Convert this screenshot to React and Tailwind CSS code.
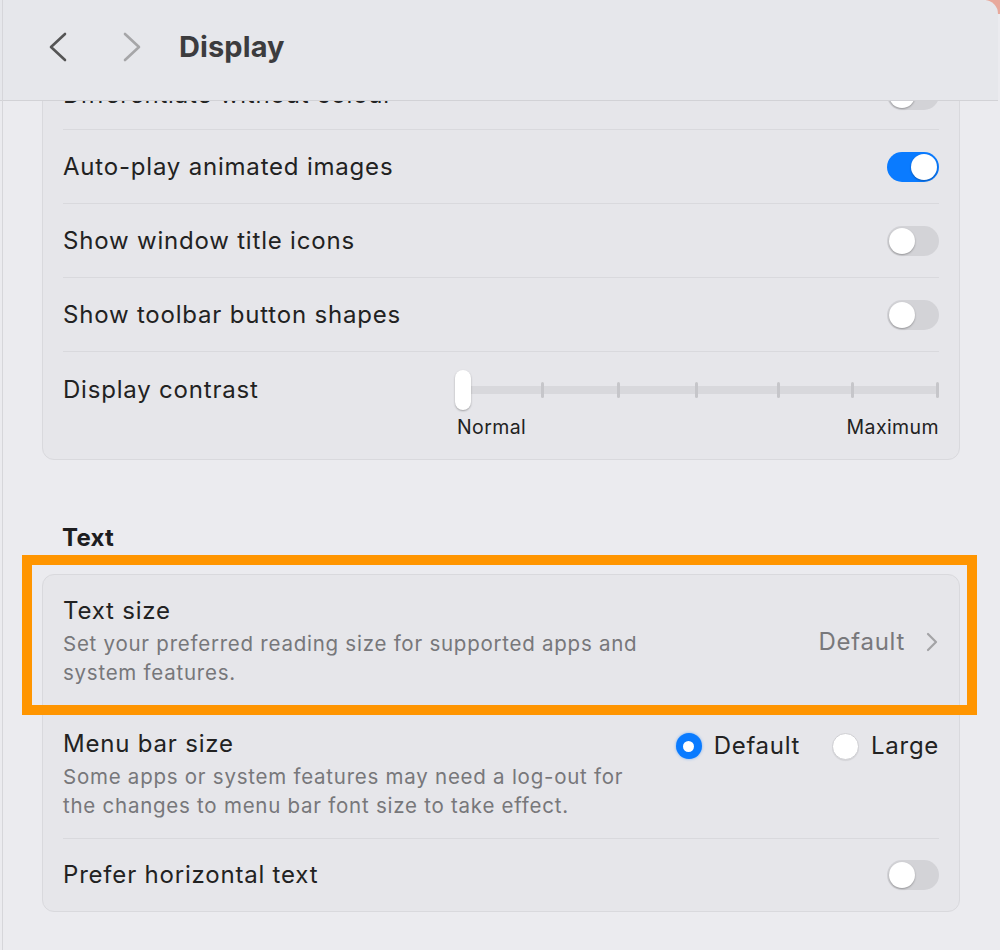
import React from 'react'

const font = { fontFamily: 'Inter, "Noto Sans", sans-serif' }

function Toggle({ on }) {
  return (
    <div
      className={
        'w-[52px] h-[30px] rounded-full p-[2px] flex items-center shrink-0 ' +
        (on ? 'bg-[#0a7bff] justify-end' : 'bg-[#d3d3d7] justify-start')
      }
    >
      <div className="w-[26px] h-[26px] rounded-full bg-white shadow-[0_1px_2px_rgba(0,0,0,0.3)]" />
    </div>
  )
}

function Radio({ on, label }) {
  return (
    <div className="flex items-center gap-[12px]">
      {on ? (
        <div className="w-[26px] h-[26px] rounded-full bg-[#0a7bff] flex items-center justify-center shadow-[0_0_3px_rgba(10,123,255,0.5)]">
          <div className="w-[11px] h-[11px] rounded-full bg-white" />
        </div>
      ) : (
        <div className="w-[27px] h-[27px] rounded-full bg-white border border-[#cfcfd3] shadow-[0_1px_1px_rgba(0,0,0,0.08)]" />
      )}
      <span className="text-[24px] tracking-[0.7px] text-[#222]">{label}</span>
    </div>
  )
}

function ToggleRow({ label, on }) {
  return (
    <div className="h-[74px] flex items-center justify-between border-b border-[#d9d9dd]">
      <span className="text-[24px] tracking-[0.8px] text-[#222]">{label}</span>
      <Toggle on={on} />
    </div>
  )
}

function Slider() {
  const ticks = [543, 619, 697, 779, 853, 938]
  return (
    <div className="w-[484px] flex flex-col">
      <div className="relative h-[40px]">
        <div className="absolute left-[6px] right-0 top-[16px] h-[8px] rounded-full bg-[#d8d8dc]" />
        {ticks.map((t) => (
          <div
            key={t}
            className="absolute top-[12px] w-[3px] h-[16px] rounded-full bg-[#c6c6ca]"
            style={{ left: t - 456 - 1.5 }}
          />
        ))}
        <div className="absolute left-0 top-0 w-[16px] h-[40px] rounded-full bg-white shadow-[0_1px_2px_rgba(0,0,0,0.3)]" />
      </div>
      <div className="flex justify-between text-[19.5px] tracking-[0.4px] text-[#222] mt-[4px] leading-[26px] pl-[2px]">
        <span>Normal</span>
        <span>Maximum</span>
      </div>
    </div>
  )
}

export default function App() {
  return (
    <div className="w-[1000px] h-[950px] relative overflow-hidden bg-[#ebebef]" style={font}>
      {/* desktop peeking through the rounded window corner */}
      <div className="absolute top-0 right-0 w-[14px] h-[14px] bg-[#e8a99c]" />
      <div className="absolute top-0 bottom-0 left-[2px] w-px bg-[#d6d6da] z-20" />

      <header className="absolute top-0 left-0 right-[2px] h-[101px] z-10 bg-[#e6e7eb] border-b border-[#d2d2d6] rounded-tr-[14px] flex items-center pl-[48px] pb-[6px]">
        <svg width="20" height="30" viewBox="0 0 20 30" className="mr-[54px]">
          <path d="M17 2 L3 15 L17 28" fill="none" stroke="#555" strokeWidth="2.6" strokeLinecap="round" strokeLinejoin="round" />
        </svg>
        <svg width="20" height="30" viewBox="0 0 20 30" className="mr-[37px]">
          <path d="M3 2 L17 15 L3 28" fill="none" stroke="#a6a6a8" strokeWidth="2.6" strokeLinecap="round" strokeLinejoin="round" />
        </svg>
        <h1 className="text-[29px] font-bold text-[#3c3c3e] tracking-[0.1px]">Display</h1>
      </header>

      <main className="pt-[45px] pl-[42px] pr-[40px]">
        <section className="rounded-[12px] bg-[#e6e6ea] border border-[#d9d9dd] px-[20px]">
          <div className="h-[84px] pt-[14px] flex items-center justify-between border-b border-[#d9d9dd]">
            <span className="text-[24px] tracking-[0.8px] text-[#222]">Differentiate without colour</span>
            <Toggle on={false} />
          </div>
          <ToggleRow label="Auto-play animated images" on />
          <ToggleRow label="Show window title icons" on={false} />
          <ToggleRow label="Show toolbar button shapes" on={false} />
          <div className="h-[107px] flex justify-between pt-[18px]">
            <span className="text-[24px] tracking-[0.8px] text-[#222] leading-[40px]">Display contrast</span>
            <Slider />
          </div>
        </section>

        <h2 className="mt-[64px] mb-[22px] px-[20px] text-[24px] font-bold tracking-[0.3px] text-[#1d1d1f] leading-[28px]">Text</h2>

        <section className="relative rounded-[12px] bg-[#e6e6ea] border border-[#d9d9dd] px-[20px]">
          <div className="pt-[22px] pb-[20px] flex items-center justify-between border-b border-[#d9d9dd]">
            <div className="flex flex-col">
              <span className="text-[24px] tracking-[0.8px] text-[#222] leading-[28px]">Text size</span>
              <span className="text-[20.5px] tracking-[0.75px] text-[#77777a] leading-[29px] mt-[4px] w-[585px]">
                Set your preferred reading size for supported apps and system features.
              </span>
            </div>
            <div className="flex items-center gap-[21px] pr-[1px]">
              <span className="text-[24px] tracking-[0.7px] text-[#78787b]">Default</span>
              <svg width="12" height="20" viewBox="0 0 12 20">
                <path d="M2 2 L10 10 L2 18" fill="none" stroke="#a3a3a6" strokeWidth="2.2" strokeLinecap="round" strokeLinejoin="round" />
              </svg>
            </div>
          </div>

          <div className="pt-[22px] pb-[18px] flex justify-between border-b border-[#d9d9dd]">
            <div className="flex flex-col">
              <span className="text-[24px] tracking-[0.8px] text-[#222] leading-[28px]">Menu bar size</span>
              <span className="text-[20.5px] tracking-[0.75px] text-[#77777a] leading-[29px] mt-[4px] w-[585px]">
                Some apps or system features may need a log-out for the changes to menu bar font size to take effect.
              </span>
            </div>
            <div className="flex items-start gap-[32px] -mt-[2px]">
              <Radio on label="Default" />
              <Radio on={false} label="Large" />
            </div>
          </div>

          <div className="h-[72px] flex items-center justify-between">
            <span className="text-[24px] tracking-[0.8px] text-[#222]">Prefer horizontal text</span>
            <Toggle on={false} />
          </div>

          {/* highlight annotation */}
          <div className="absolute left-[-21px] top-[-20px] w-[955px] h-[160px] border-[10px] border-[#ff9500] pointer-events-none" />
        </section>
      </main>
    </div>
  )
}
